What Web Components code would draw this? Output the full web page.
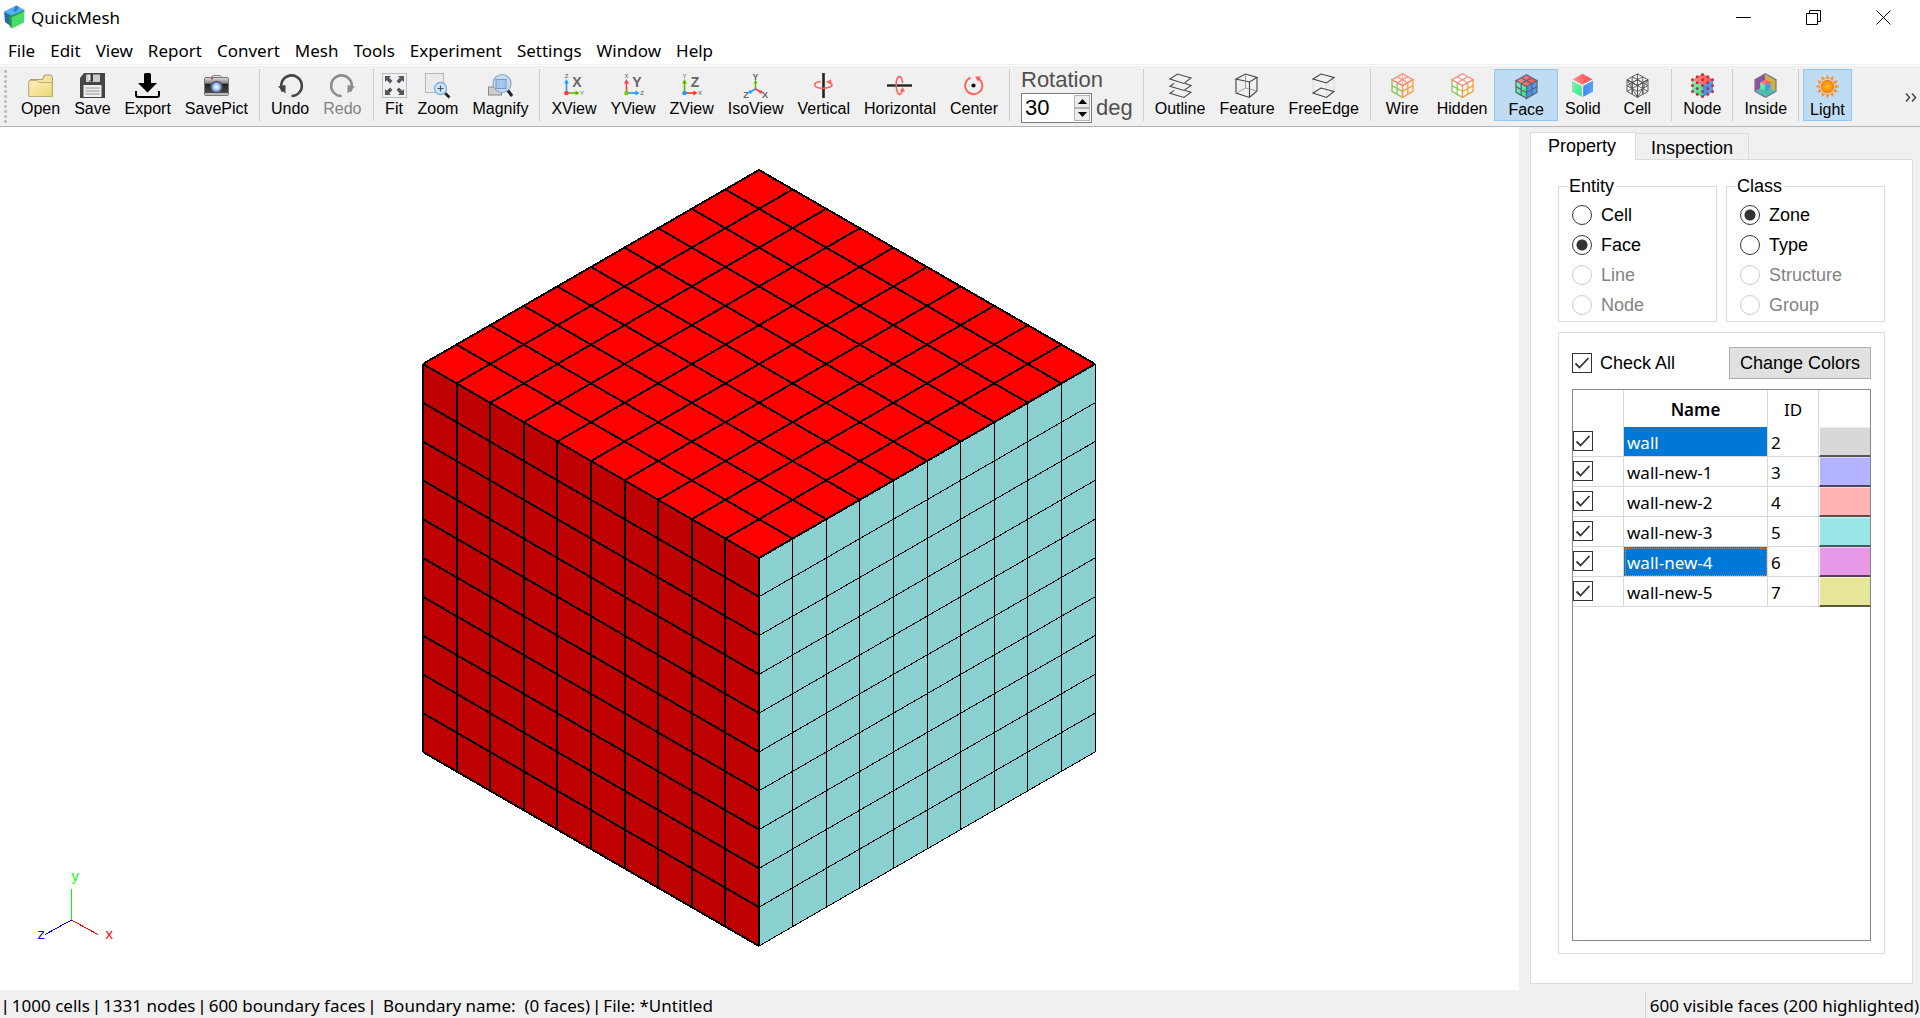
<!DOCTYPE html>
<html lang="en">
<head>
<meta charset="utf-8">
<title>QuickMesh</title>
<style>
  html,
  body {
    height: 100%;
    margin: 0;
    background: #fff;
  }
</style>
</head>
<body>
<qm-app></qm-app>

<script>
const DIVISIONS = 10

const MENUS = ['File', 'Edit', 'View', 'Report', 'Convert', 'Mesh', 'Tools', 'Experiment', 'Settings', 'Window', 'Help']

const ZONES = [
  { name: 'wall', id: 2, color: '#d8d8d8', selected: true },
  { name: 'wall-new-1', id: 3, color: '#b3b3ff' },
  { name: 'wall-new-2', id: 4, color: '#ffb3b3' },
  { name: 'wall-new-3', id: 5, color: '#99e6e6' },
  { name: 'wall-new-4', id: 6, color: '#e699e6', selected: true, current: true },
  { name: 'wall-new-5', id: 7, color: '#e6e699' }
]

/**
 * Builds the three arrows and letters of an axis view icon.
 *
 * @param {string} big - The view letter.
 * @param {string[]} up - Letter and colour of the upward axis.
 * @param {string[]} right - Letter and colour of the right axis.
 * @param {string} dot - The colour of the origin.
 * @returns {string} - The svg content.
 */
function axisIcon (big, up, right, dot) {
  return `<path d="M5.500 20V10" stroke="${up[1]}" stroke-width="1.600"/><path d="M5.500 6l2.400 4.400H3.100z" fill="${up[1]}"/>
    <path d="M5.500 20h10" stroke="${right[1]}" stroke-width="1.600"/><path d="M18.500 20l-4 2.400v-4.800z" fill="${right[1]}"/>
    <circle cx="5.500" cy="20" r="2.300" fill="${dot}"/>
    <text x="5.500" y="5" font-size="6" text-anchor="middle" fill="#555">${up[0]}</text>
    <text x="21" y="22" font-size="6" text-anchor="middle" fill="#555">${right[0]}</text>
    <text x="16" y="14" font-size="14" font-weight="bold" text-anchor="middle" fill="#666">${big}</text>`
}

// Hexagon sides shared by the cube icons.
const TOP = 'M12.500 .8L23 6.700 12.500 12.600 2 6.700z'
const LEFT = 'M2 6.700L12.500 12.600V24.300L2 18.400z'
const RIGHT = 'M23 6.700L12.500 12.600V24.300L23 18.400z'
const TOP_GRID = TOP + 'M7.200 3.700L17.800 9.700M17.800 3.700L7.200 9.700'
const LEFT_GRID = LEFT + 'M7.200 9.700V21.400M2 12.600L12.500 18.500'
const RIGHT_GRID = RIGHT + 'M17.800 9.700V21.400M23 12.600L12.500 18.500'

const GRADIENTS = `<defs>
    <linearGradient id="t" x2="1"><stop stop-color="#ff8f8f"/><stop offset="1" stop-color="#ff4848"/></linearGradient>
    <linearGradient id="l" x2="1" y2="1"><stop stop-color="#9be8c0"/><stop offset="1" stop-color="#1cf07c"/></linearGradient>
    <linearGradient id="r" x2="1"><stop stop-color="#3e8df0"/><stop offset="1" stop-color="#55a0f8"/></linearGradient>
  </defs>`
const SOLID = `${GRADIENTS}<path d="${TOP}" fill="url(#t)"/><path d="${LEFT}" fill="url(#l)"/><path d="${RIGHT}" fill="url(#r)"/>`

const NODE_DOTS = [[12.5, 1.5], [7.2, 3.7], [17.8, 3.7], [2.5, 6.7], [12.5, 6.7], [22.5, 6.7], [7.2, 9.7], [17.8, 9.7],
  [12.5, 12.6], [2.5, 12.6], [22.5, 12.6], [7.2, 15.5], [17.8, 15.5], [2.5, 18.4], [12.5, 18.4], [22.5, 18.4], [7.2, 21.3], [17.8, 21.3], [12.5, 23.5]]

let rays = ''
for (let i = 0; i < 12; i++) {
  rays += `<path d="M10.500 4.800L12.500 .5l2 4.300z" transform="rotate(${i * 30} 12.500 12.500)"/>`
}

const ICONS = {
  open: `<defs><linearGradient id="f" x2="1" y2="1"><stop stop-color="#ffefb8"/><stop offset="1" stop-color="#ecd97a"/></linearGradient></defs>
    <path d="M1 23V8.500l1.500-2h12L16 2.500 17 2h6l.8 1 .7 2V23z" fill="#f5e0a0" stroke="#a39a76"/>
    <path d="M.8 23.500V9.500Q1 8 3 7.500H9l2 2h13.300v14z" fill="url(#f)" stroke="#b0a272" stroke-width=".8"/>`,
  save: `<path d="M4 0h21v25H0V5z" fill="#454545"/><path d="M6 1.500h14v7.500H6z" fill="#ccc"/><path d="M9 1h4v7.500H9z" fill="#3b3b3b"/>
    <path d="M8.500 1.500h2v6h-2z" fill="#eee"/><path d="M3.500 12h18v12h-18z" fill="#eee"/>
    <path d="M5.500 15h14M5.500 18h14M5.500 21h14" stroke="#999" stroke-width="1.200"/>`,
  export: `<path d="M9 1.500Q9 0 10.500 0h4Q16 0 16 1.500V10h6L12.500 19.500 3 10h6z" fill="#000"/>
    <path d="M1 18v4Q1 24 3 24H22Q24 24 24 22V18" fill="none" stroke="#000" stroke-width="2"/>`,
  camera: `<defs><linearGradient id="c" y2="1" x2="0"><stop stop-color="#ddd"/><stop offset=".3" stop-color="#8b8b8b"/><stop offset=".38" stop-color="#222"/><stop offset="1" stop-color="#555"/></linearGradient>
    <radialGradient id="n"><stop stop-color="#fff"/><stop offset=".6" stop-color="#a8c8f4"/><stop offset="1" stop-color="#5a82c4"/></radialGradient></defs>
    <path d="M7 4.500l1.500-2h8l1.500 2z" fill="#ddd" stroke="#888"/><rect x=".5" y="4.500" width="24" height="18" rx="1.500" fill="url(#c)" stroke="#777"/>
    <path d="M1 20h23v2H1z" fill="#bbb"/><circle cx="12.500" cy="14" r="6.300" fill="#555"/><circle cx="12.500" cy="14" r="5" fill="url(#n)"/><circle cx="8" cy="5.500" r="1" fill="#e22"/>`,
  undo: `<path d="M5 18.500A10.300 10.300 0 1 1 13.500 23" fill="none" stroke="#444" stroke-width="2.600"/><path d="M0 13.500l7.500-1.500v8.500z" fill="#444"/>`,
  redo: `<path d="M20 18.500A10.300 10.300 0 1 0 11.500 23" fill="none" stroke="#8c8c8c" stroke-width="2.600"/><path d="M25 13.500l-7.500-1.500v8.500z" fill="#8c8c8c"/>`,
  fit: `<rect x=".5" y=".5" width="24" height="24" fill="#eef0f4" stroke="#b9bdc4"/>
    <path d="M3 3h6L7.200 4.800 10.500 8 8 10.500 4.800 7.200 3 9z" fill="#555"/><path d="M22 3h-6l1.800 1.800L14.500 8 17 10.500l3.200-3.300L22 9z" fill="#555"/>
    <path d="M3 22h6l-1.800-1.800L10.500 17 8 14.500l-3.200 3.300L3 16z" fill="#555"/><path d="M22 22h-6l1.800-1.800L14.500 17 17 14.500l3.200 3.300L22 16z" fill="#555"/>`,
  zoom: `<rect x=".5" y=".5" width="18" height="19" fill="#e8eaec" stroke="#b4b8bc"/><path d="M20 20l4.500 4.500" stroke="#222" stroke-width="2.600"/>
    <circle cx="15.500" cy="15.500" r="6" fill="#cfe4f8" stroke="#7fb0e0" stroke-width="1.300"/><path d="M12.500 15.500h6M15.500 12.500v6" stroke="#456" stroke-width="1.200"/>`,
  magnify: `<rect x=".5" y="14" width="13" height="8" fill="#ccc" stroke="#888"/><path d="M19.500 17l4.500 6" stroke="#222" stroke-width="3"/>
    <circle cx="14" cy="10.500" r="9" fill="#c3dbf6" stroke="#8aa4c4" stroke-width="1.200"/><rect x="8" y="6.500" width="10" height="9" fill="#a4c5ec" stroke="#7c98bb"/>`,
  xview: axisIcon('X', ['Z', '#1a9cff'], ['Y', '#62b800'], '#ff3848'),
  yview: axisIcon('Y', ['X', '#ff3848'], ['Z', '#1a9cff'], '#78c800'),
  zview: axisIcon('Z', ['Y', '#62b800'], ['X', '#ff3020'], '#1a9cff'),
  iso: `<path d="M12.500 16V9" stroke="#62b800" stroke-width="1.500"/><path d="M12.500 16L7 19" stroke="#1a9cff" stroke-width="1.500"/><path d="M12.500 16l5.500 3" stroke="#ff3848" stroke-width="1.500"/>
    <path d="M12.500 6.500l2 4h-4z" fill="#62b800"/><path d="M4.500 20.500l2.500-3.700 2 3.400z" fill="#1a9cff"/><path d="M20.500 20.500l-2.500-3.700-2 3.400z" fill="#ff3848"/>
    <text x="12.500" y="7" font-size="9" font-weight="bold" text-anchor="middle" fill="#666">Y</text>
    <text x="3" y="25" font-size="9" font-weight="bold" text-anchor="middle" fill="#666">Z</text>
    <text x="22" y="25" font-size="9" font-weight="bold" text-anchor="middle" fill="#666">X</text>`,
  vertical: `<path d="M12.500 0v25" stroke="#222" stroke-width="2.600"/><path d="M10 8.500C1 9 2 14.500 10 15.300q4 .4 9-1.300 5-3-2.500-5" fill="none" stroke="#ff6058" stroke-width="1.600"/><path d="M15 8.800l5-2.300.5 5z" fill="#ff6058"/>`,
  horizontal: `<path d="M0 12.500h25" stroke="#222" stroke-width="2.400"/><path d="M15.500 10C15 1 10 2 9.200 10q-.4 5 1.300 9.500 2.500 4.500 5-1.500" fill="none" stroke="#ff6058" stroke-width="1.600"/><path d="M13 18.500l2.500-4.500 2.500 4.500z" fill="#ff6058"/>`,
  center: `<circle cx="12.500" cy="12.500" r="2.100" fill="#111"/><path d="M9.500 4.700A8.600 8.600 0 1 0 17 5.200" fill="none" stroke="#ff6058" stroke-width="1.800"/><path d="M14 3.500h6l-3 5z" fill="#ff6058"/>`,
  outline: `<g fill="none" stroke="#4c4c4c" stroke-width="1.100"><path d="M2 6L9.500 1 23 5 16 10.500z"/><path d="M6 10.500L2 13.200 16 17.500 23 12.500 17 10.500"/><path d="M6 17.500L2 20.200 16 24.500 23 19.200 17 17.500"/></g>`,
  feature: `<g fill="none" stroke="#444" stroke-width="1.100"><path d="M2 6L11.500 1 23 4.500 15.500 9z"/><path d="M2 6V20L15.500 24.500 23 18V4.500M15.500 9V24.500"/><path d="M11.500 1V15L2 20M11.500 15L23 18" stroke="#888" stroke-width=".8"/></g>`,
  freeedge: `<g fill="none" stroke="#444" stroke-width="1.100"><path d="M2 6V20M23 5V18M15.500 10V24" stroke="#ddd"/><path d="M2 6L10 1 23 4.500 15.500 10z"/><path d="M2 20L10 15 23 18.500 15.500 24.500z"/></g>`,
  wire: `<g fill="none" stroke-width="1.300"><path d="${LEFT_GRID}" stroke="#88c855"/><path d="${RIGHT_GRID}" stroke="#ff9a3c"/><path d="${TOP_GRID}" stroke="#ff8878"/><path d="M12.500 1v12" stroke="#e8a878" stroke-width=".8"/></g>`,
  hidden: `<g fill="#fff" stroke-width="1.300"><path d="${LEFT_GRID}" stroke="#88c855"/><path d="${RIGHT_GRID}" stroke="#ff9a3c"/><path d="${TOP_GRID}" stroke="#ff8878"/></g>`,
  face: `${SOLID}<path d="${LEFT_GRID}${RIGHT_GRID}${TOP_GRID}" fill="none" stroke="#5d6878" stroke-width="1.300"/>`,
  solid: `${SOLID}<path d="M2 6.700L12.500 12.600 23 6.700M12.500 12.600V24" fill="none" stroke="#fff" stroke-width="1.300"/>`,
  cell: `<path d="${LEFT_GRID}${RIGHT_GRID}${TOP_GRID}M2 6.700L12.500 24.300 23 6.700M12.500 1V24M2 18.400L23 6.700M2 6.700L23 18.400M2 12.600L12.500 6.700 23 12.600M7.200 3.700V21M17.800 3.700V21" fill="none" stroke="#505050" stroke-width=".9"/>`,
  node: `${SOLID}${NODE_DOTS.map(([x, y]) => `<circle cx="${x}" cy="${y}" r="1.500" fill="#c03038"/>`).join('')}`,
  inside: `${GRADIENTS}<path d="M12.500 .8V12.600L2 18.400V6.700z" fill="#8f50a0"/><path d="M12.500 .8V12.600L23 18.400V6.700z" fill="#cdb33c"/><path d="M2 18.400L12.500 12.600 23 18.400 12.500 24.300z" fill="#52bcb0"/>
    <g transform="translate(6.300 6) scale(.5)"><path d="${TOP}" fill="url(#t)"/><path d="${LEFT}" fill="url(#l)"/><path d="${RIGHT}" fill="url(#r)"/></g>
    <path d="M12.500 .8L23 6.700V18.400L12.500 24.300 2 18.400V6.700z" fill="none" stroke="#778" stroke-width="1.200"/>`,
  light: `<defs><radialGradient id="s"><stop stop-color="#ffc020"/><stop offset="1" stop-color="#ff7c08"/></radialGradient></defs><circle cx="12.500" cy="12.500" r="6.800" fill="url(#s)"/><g fill="#ff9020">${rays}</g>`
}

// Toolbar content, one array for each group between separators.
// A tool is its label, icon, state and side padding.
const TOOLS = [
  [['Open', 'open'], ['Save', 'save'], ['Export', 'export'], ['SavePict', 'camera']],
  [['Undo', 'undo'], ['Redo', 'redo', 'disabled']],
  [['Fit', 'fit'], ['Zoom', 'zoom'], ['Magnify', 'magnify']],
  [['XView', 'xview'], ['YView', 'yview'], ['ZView', 'zview'], ['IsoView', 'iso'], ['Vertical', 'vertical'], ['Horizontal', 'horizontal'], ['Center', 'center']],
  'rotation',
  [['Outline', 'outline'], ['Feature', 'feature'], ['FreeEdge', 'freeedge']],
  [['Wire', 'wire', '', 10], ['Hidden', 'hidden'], ['Face', 'face', 'checked', 13], ['Solid', 'solid'], ['Cell', 'cell', '', 15]],
  [['Node', 'node']],
  [['Inside', 'inside']],
  [['Light', 'light', 'checked']]
]

/**
 * Base class that renders its markup into an open shadow root.
 */
class QmElement extends HTMLElement {
  constructor () {
    super()
    this.attachShadow({ mode: 'open' })
  }

  connectedCallback () {
    const template = document.createElement('template')
    template.innerHTML = this.render()
    this.shadowRoot.replaceChildren(template.content.cloneNode(true))
  }
}

customElements.define('qm-titlebar', class extends QmElement {
  render () {
    return `
      <style>
        :host { display: flex; align-items: center; height: 34px; padding: 0 2px 0 4px; font-size: 17px; }
        .logo { width: 22px; height: 24px; margin-right: 5px; }
        h1 { flex: 1; margin: 0; font-size: inherit; font-weight: normal; }
        button { width: 70px; height: 34px; padding: 0; border: 0; background: none; }
        button svg { display: block; margin: 0 auto; }
      </style>
      <svg class="logo" viewBox="0 0 22 24">
        <path d="M0 6.500L12 .5 21 5 19 8 8 12z" fill="#55b0f5"/><path d="M0 6.500L8 11V22L1 17z" fill="#2c68a8"/>
        <path d="M12 .5l3 1.500-3 5-3-1z" fill="#2f7fca"/>
        <path d="M7 12L20.500 6 20 17.500 8 23.500z" fill="#48dc68"/><path d="M5 11.500L19 5.500l1.500.8L7.500 12.500V23.500L6 22z" fill="#28994a"/>
      </svg>
      <h1>QuickMesh</h1>
      <button aria-label="Minimize"><svg width="15" height="15"><path d="M0 7.500h15" stroke="#000"/></svg></button>
      <button aria-label="Restore"><svg width="15" height="15"><path d="M.5 3.500h11v11H.5zM3.500 3.500V.5h11v11h-3" fill="none" stroke="#000"/></svg></button>
      <button aria-label="Close"><svg width="15" height="15"><path d="M.5.5l14 14M14.500.5l-14 14" stroke="#000"/></svg></button>`
  }
})

customElements.define('qm-menubar', class extends QmElement {
  render () {
    return `
      <style>
        :host { display: flex; height: 30px; border-bottom: 1px solid #efefef; font-size: 17px; }
        button { padding: 3px 7px 0 8px; border: 0; background: none; font: inherit; color: inherit; }
        button:hover { background: #c0dcf3; }
      </style>
      ${MENUS.map(name => `<button>${name}</button>`).join('')}`
  }
})

customElements.define('qm-tool-button', class extends QmElement {
  render () {
    const disabled = this.hasAttribute('disabled')
    const pad = this.getAttribute('pad') || 6
    return `
      <style>
        :host { display: block; font: 16px/18px "Liberation Sans", Arial, sans-serif; }
        button {
          display: flex; flex-direction: column; align-items: center; gap: 2px; box-sizing: border-box;
          height: 52px; padding: 3px ${pad}px; border: 1px solid transparent; background: none; font: inherit; color: #000;
        }
        :host([checked]) button { padding-top: 4px; border-color: #90c8f6; background: #c0dcf3; }
        button:disabled { color: #838383; }
        svg { width: 25px; height: 25px; margin: 0 -3px; overflow: visible; }
      </style>
      <button ${disabled ? 'disabled' : ''} ${this.hasAttribute('checked') ? 'aria-pressed="true"' : ''}>
        <svg viewBox="0 0 25 25">${ICONS[this.getAttribute('icon')]}</svg>
        <span><slot></slot></span>
      </button>`
  }
})

customElements.define('qm-rotation', class extends QmElement {
  render () {
    return `
      <style>
        :host { display: block; padding: 0 6px 0 7px; font: 22px/22px "Liberation Sans", Arial, sans-serif; color: #505050; }
        label { display: block; }
        .row { display: flex; align-items: center; gap: 4px; padding-top: 2px; }
        .spin { display: flex; box-sizing: border-box; width: 71px; height: 30px; padding: 1px; border: 1px solid #7a7a7a; background: #fff; }
        input { flex: 1; min-width: 0; padding: 0 2px; border: 0; outline: 0; font: inherit; color: #000; }
        .arrows { display: flex; flex-direction: column; width: 16px; }
        .arrows button { flex: 1; display: grid; place-items: center; min-height: 0; padding: 0; border: 1px solid #b5b5b5; background: #ececec; }
      </style>
      <label for="angle">Rotation</label>
      <div class="row">
        <div class="spin">
          <input id="angle" type="text" value="30">
          <div class="arrows">
            <button aria-label="Increase"><svg width="9" height="5"><path d="M0 5L4.500 0 9 5z"/></svg></button>
            <button aria-label="Decrease"><svg width="9" height="5"><path d="M0 0h9L4.500 5z"/></svg></button>
          </div>
        </div>
        <span>deg</span>
      </div>`
  }
})

customElements.define('qm-toolbar', class extends QmElement {
  render () {
    const groups = TOOLS.map(group => {
      if (group === 'rotation') {
        return '<qm-rotation></qm-rotation>'
      }
      return group.map(([label, icon, state = '', pad = '']) => `<qm-tool-button icon="${icon}" pad="${pad}" ${state}>${label}</qm-tool-button>`).join('')
    })
    return `
      <style>
        :host { display: flex; align-items: flex-start; box-sizing: border-box; height: 61px; padding-top: 3px; border-bottom: 1px solid #b4b4b4; background: #f0f0f0; overflow: hidden; }
        .handle { width: 3px; height: 54px; margin: 0 7px 0 4px; background: radial-gradient(circle, #bbb 1px, transparent 2px) 0 0 / 3px 5px; }
        .line { flex: none; width: 1px; height: 52px; margin: 0 4px; background: #cdcdcd; }
        qm-tool-button, qm-rotation { flex: none; }
        .more { align-self: center; margin-left: auto; padding: 0 3px; border: 0; background: none; }
        .more svg { display: block; }
      </style>
      <div class="handle"></div>
      ${groups.join('<div class="line"></div>')}
      <button class="more" aria-label="More tools"><svg width="12" height="9"><path d="M1 .5l3.500 4L1 8.500M7 .5l3.500 4L7 8.500" fill="none" stroke="#444" stroke-width="1.500"/></svg></button>`
  }
})

customElements.define('qm-viewport', class extends QmElement {
  /**
   * Returns the outline and grid lines of one cube side.
   *
   * @param {number[]} o - The corner that the side starts in.
   * @param {number[]} u - The first edge.
   * @param {number[]} v - The second edge.
   * @param {string} fill - The colour of the side.
   * @param {number} width - The width of the lines.
   * @returns {string} - The svg content.
   */
  side (o, u, v, fill, width) {
    let d = ''
    for (let i = 0; i <= DIVISIONS; i++) {
      const t = i / DIVISIONS
      d += `M${o[0] + u[0] * t} ${o[1] + u[1] * t}l${v[0]} ${v[1]}`
      d += `M${o[0] + v[0] * t} ${o[1] + v[1] * t}l${u[0]} ${u[1]}`
    }
    return `<path d="M${o}l${u}l${v}l${[-u[0], -u[1]]}z" fill="${fill}"/>
      <path d="${d}" fill="none" stroke="#000" stroke-width="${width}"/>`
  }

  render () {
    return `
      <style>
        :host { display: grid; min-width: 0; min-height: 0; background: #fff; }
        svg { grid-area: 1 / 1; }
        .mesh { width: 100%; height: 100%; min-height: 0; }
        .axes { place-self: end start; margin: 0 0 40px 36px; overflow: visible; font: 14px "Liberation Mono", monospace; }
      </style>
      <svg class="mesh" viewBox="-431 -431 863 863" shape-rendering="crispEdges">
        ${this.side([0, 0], [336, -194], [0, 388], '#8bd0d0', 1)}
        ${this.side([0, 0], [-336, -194], [0, 388], '#be0000', 2)}
        ${this.side([0, 0], [336, -194], [-336, -194], '#f00', 2)}
      </svg>
      <svg class="axes" width="80" height="88" viewBox="0 -12 80 88">
        <g fill="none" shape-rendering="crispEdges">
          <path d="M35.500 46V15" stroke="#0f0"/><path d="M35.500 46L62 60.500" stroke="#f00"/><path d="M35.500 46L9 60.500" stroke="#00f"/>
        </g>
        <text x="35" y="7" fill="#0f0">y</text><text x="69" y="65" fill="#f00">x</text><text x="1" y="65" fill="#00f">z</text>
      </svg>`
  }
})

customElements.define('qm-radio-group', class extends QmElement {
  render () {
    const name = this.getAttribute('label')
    const options = this.getAttribute('options').split(' ')
    const value = this.getAttribute('value')
    return `
      <style>
        :host { display: block; flex: 1; }
        fieldset { min-width: 0; margin: 0; padding: 0 13px 1px; border: 1px solid #dcdcdc; }
        legend { margin-left: -5px; padding: 0 2px; line-height: 20px; }
        div { display: flex; align-items: center; gap: 9px; height: 30px; }
        .first { margin-top: 4px; }
        input { appearance: none; width: 20px; height: 20px; margin: 0; border: 1px solid #333; border-radius: 50%; background: #fff; }
        input:checked { background: radial-gradient(circle, #333 5px, #fff 6px); }
        input:disabled { border-color: #ccc; }
        input:disabled + label { color: #838383; }
      </style>
      <fieldset>
        <legend>${name}</legend>
        ${options.map((option, i) => `<div class="${i ? '' : 'first'}">
          <input type="radio" name="choice" id="${option}" ${option === value ? 'checked' : ''} ${i > 1 ? 'disabled' : ''}>
          <label for="${option}">${option}</label>
        </div>`).join('')}
      </fieldset>`
  }
})

const CHECKBOX_STYLE = `
  input[type=checkbox] { appearance: none; display: block; flex: none; box-sizing: border-box; width: 20px; height: 20px; margin: 0; border: 1px solid #333; background: #fff; }
  input[type=checkbox]:checked { background: url('data:image/svg+xml,<svg xmlns="http://www.w3.org/2000/svg" viewBox="0 0 18 18"><path d="M2.500 9.500l4 4 9-9.500" fill="none" stroke="%23333" stroke-width="1.800"/></svg>') center / 18px 18px; }`

customElements.define('qm-zone-table', class extends QmElement {
  render () {
    const rows = ZONES.map(zone => `
      <tr>
        <td class="check"><input type="checkbox" checked aria-label="Show ${zone.name}"></td>
        <td class="name ${zone.selected ? 'selected' : ''} ${zone.current ? 'current' : ''}">${zone.name}</td>
        <td>${zone.id}</td>
        <td class="swatch"><button style="background: ${zone.color}" aria-label="Color of ${zone.name}"></button></td>
      </tr>`).join('')
    return `
      <style>
        ${CHECKBOX_STYLE}
        :host { display: block; flex: 1; min-height: 0; border: 1px solid #828790; overflow: hidden; font: 17px/20px "Noto Sans", sans-serif; }
        table { width: 100%; border-collapse: separate; border-spacing: 0; table-layout: fixed; }
        th, td { box-sizing: border-box; border-right: 1px solid #d8d8d8; }
        th { height: 37px; padding: 2px 0 0; font-weight: 600; }
        th.id { font-weight: normal; }
        td { height: 30px; padding: 2px 3px 0; border-bottom: 1px solid #d8d8d8; }
        th:last-child, td:last-child { border-right: 0; }
        td.check { padding: 0 0 2px; }
        td.swatch { padding: 0; border-bottom: 0; }
        .selected { background: #0078d7; background-clip: padding-box; color: #fff; }
        .current { outline: 1px dotted #f08030; outline-offset: -2px; }
        .swatch button { display: block; width: 100%; height: 30px; padding: 0; border: solid; border-width: 1px 0 2px 1px; border-color: #ffffff80 #fff #00000099; }
      </style>
      <table>
        <colgroup><col width="51"><col><col width="51"><col width="51"></colgroup>
        <thead><tr><th></th><th>Name</th><th class="id">ID</th><th></th></tr></thead>
        <tbody>${rows}</tbody>
      </table>`
  }
})

customElements.define('qm-side-panel', class extends QmElement {
  render () {
    return `
      <style>
        ${CHECKBOX_STYLE}
        :host { display: flex; flex-direction: column; box-sizing: border-box; padding: 5px 7px 6px 11px; background: #f0f0f0; font: 18px/20px "Liberation Sans", Arial, sans-serif; }
        .tabs { display: flex; align-items: flex-end; }
        .tabs button { box-sizing: border-box; height: 26px; padding: 2px 15px 0; border: 1px solid #dcdcdc; border-width: 1px 1px 0 0; background: #f0f0f0; font: inherit; color: inherit; }
        .tabs .active { z-index: 1; height: 28px; margin-bottom: -1px; padding: 0 19px 2px 17px; border-left-width: 1px; background: #fff; }
        .pane { flex: 1; display: flex; flex-direction: column; gap: 10px; min-height: 0; padding: 16px 27px 29px; border: 1px solid #dcdcdc; background: #fff; }
        .groups { display: flex; gap: 9px; }
        .zones { flex: 1; display: flex; flex-direction: column; gap: 10px; min-height: 0; padding: 14px 13px 12px; border: 1px solid #dcdcdc; }
        .actions { display: flex; align-items: center; }
        .actions label { flex: 1; padding-left: 8px; }
        .actions button { height: 32px; padding: 0 10px; border: 1px solid #adadad; background: #e1e1e1; font: inherit; color: inherit; }
      </style>
      <div class="tabs" role="tablist">
        <button class="active" role="tab" aria-selected="true">Property</button>
        <button role="tab">Inspection</button>
      </div>
      <div class="pane">
        <div class="groups">
          <qm-radio-group label="Entity" options="Cell Face Line Node" value="Face"></qm-radio-group>
          <qm-radio-group label="Class" options="Zone Type Structure Group" value="Zone"></qm-radio-group>
        </div>
        <div class="zones">
          <div class="actions">
            <input type="checkbox" id="all" checked><label for="all">Check All</label>
            <button>Change Colors</button>
          </div>
          <qm-zone-table></qm-zone-table>
        </div>
      </div>`
  }
})

customElements.define('qm-statusbar', class extends QmElement {
  render () {
    const text = '| 1000 cells | 1331 nodes | 600 boundary faces |  Boundary name:  (0 faces) | File: *Untitled'
    return `
      <style>
        :host { display: flex; justify-content: space-between; box-sizing: border-box; height: 28px; padding: 2px 1px 0 3px; background: #f0f0f0; font-size: 17px; line-height: 28px; white-space: pre; overflow: hidden; }
        b { font-family: "Liberation Sans", Arial, sans-serif; font-weight: normal; line-height: 1; }
        .faces { padding-left: 4px; border-left: 1px solid #d5d5d5; }
      </style>
      <span>${text.replaceAll('|', '<b>|</b>')}</span>
      <span class="faces">600 visible faces (200 highlighted)</span>`
  }
})

customElements.define('qm-app', class extends QmElement {
  render () {
    return `
      <style>
        :host { display: flex; flex-direction: column; height: 100vh; overflow: hidden; font: 16px "Noto Sans", sans-serif; color: #000; }
        qm-toolbar { margin-top: 1px; }
        main { flex: 1; display: grid; grid-template-columns: 1fr 401px; min-height: 0; }
      </style>
      <qm-titlebar></qm-titlebar>
      <qm-menubar></qm-menubar>
      <qm-toolbar></qm-toolbar>
      <main>
        <qm-viewport></qm-viewport>
        <qm-side-panel></qm-side-panel>
      </main>
      <qm-statusbar></qm-statusbar>`
  }
})
</script>
</body>
</html>
